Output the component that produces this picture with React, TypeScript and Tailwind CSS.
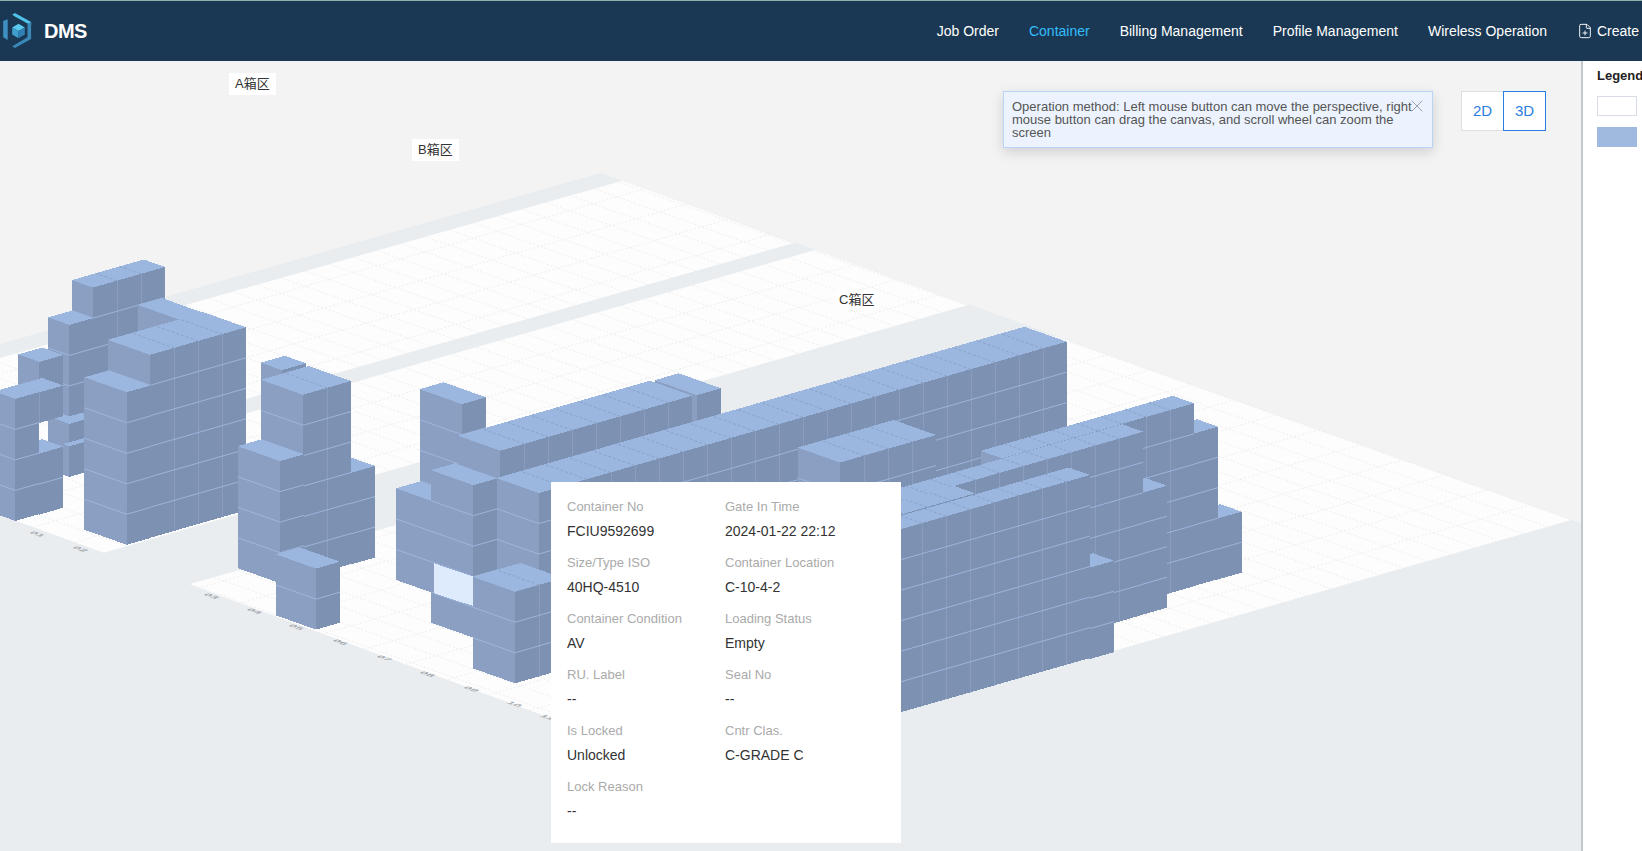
import { FilePlus, X } from 'lucide-react'

type Pt = [number, number]
type Run = { x: number; y: number; n: number; l: number; d?: number }

const UX = 24
const UY = 6.88
const VX = 42.3
const VY = 15
const LEVEL = 30.5

const pts = (list: Pt[]) => list.map(p => `${p[0]},${p[1]}`).join(' ')

// x, y = front right corner of the top face, n = columns going left, l = levels, d = depth (1 = 40ft)
const runs: Run[] = [
  // left cluster
  { x: 165, y: 267, n: 3, l: 6, d: 0.5 },
  { x: 204, y: 313, n: 1, l: 6 },
  { x: 93.3, y: 417, n: 1, l: 1, d: 0.5 },
  { x: 93.3, y: 318, n: 1, l: 3, d: 0.5 },
  { x: 93.3, y: 439.5, n: 1, l: 1, d: 0.15 },
  { x: 63.3, y: 355, n: 1, l: 2, d: 0.5 },
  { x: 63.3, y: 385.5, n: 2, l: 1, d: 0.5 },
  { x: 63.3, y: 446.7, n: 1, l: 2, d: 0.5 },
  { x: 39.3, y: 392, n: 1, l: 4, d: 0.5 },
  { x: 246, y: 327.3, n: 4, l: 6 },
  { x: 150.7, y: 385.4, n: 1, l: 5 },
  // second cluster
  { x: 306, y: 363.3, n: 1, l: 1, d: 0.5 },
  { x: 375, y: 466, n: 1, l: 3 },
  { x: 351, y: 381, n: 2, l: 6 },
  { x: 304, y: 454.3, n: 1, l: 4 },
  { x: 340, y: 561.7, n: 1, l: 2, d: 0.95 },
  // long rows behind the tooltip
  { x: 721, y: 388.3, n: 1, l: 3 },
  { x: 486, y: 397.3, n: 1, l: 4 },
  { x: 692.3, y: 395.7, n: 8, l: 5 },
  { x: 1066.7, y: 341.7, n: 22, l: 6 },
  { x: 936, y: 435, n: 4, l: 5 },
  { x: 458, y: 495, n: 1, l: 3, d: 0.9 },
  { x: 497.3, y: 478.3, n: 1, l: 5 },
  // right cluster
  { x: 1241.7, y: 511.7, n: 1, l: 2, d: 0.5 },
  { x: 1218, y: 426.7, n: 1, l: 5, d: 0.5 },
  { x: 1194, y: 403.3, n: 8, l: 6, d: 0.5 },
  { x: 1167, y: 485.7, n: 1, l: 4, d: 0.5 },
  { x: 1143.3, y: 431.7, n: 12, l: 6, d: 0.5 },
  { x: 1114, y: 560.7, n: 1, l: 3, d: 0.5 },
  { x: 975, y: 493.3, n: 6, l: 6, d: 0.5 },
  { x: 1090, y: 475, n: 10, l: 6, d: 0.5 },
]

const frontRun: Run = { x: 563, y: 578, n: 2, l: 3 }
const zones: Pt[][] = [
  [[622.4, 180.7], [794, 243], [0, 469], [0, 358]],
  [[815, 250], [968, 305], [103.6, 552.7], [0, 515], [0, 484]],
  [[189.3, 584.3], [1055.3, 336], [1571.7, 520], [694, 771]],
]
const groundMarks: Pt[] = [[35, 533], [78, 548], [209, 595], [252, 610], [294, 626], [338, 641], [382, 657], [425, 673], [469, 688], [512, 703], [545, 716]]

function Stack({ run }: { run: Run }) {
  const { x, y, n, l, d = 1 } = run
  const fx = x - UX * n
  const fy = y + UY * n
  const h = l * LEVEL
  const bx = VX * d
  const by = VY * d
  const cols = Array.from({ length: n - 1 }, (_, i) => i + 1)
  const levels = Array.from({ length: l - 1 }, (_, i) => i + 1)
  return (
    <g>
      <g shapeRendering="crispEdges">
        <polygon points={pts([[x, y], [fx, fy], [fx - bx, fy - by], [x - bx, y - by]])} fill="#9bb7df" />
        <polygon points={pts([[fx, fy], [fx - bx, fy - by], [fx - bx, fy - by + h], [fx, fy + h]])} fill="#8a9fc1" />
        <polygon points={pts([[x, y], [fx, fy], [fx, fy + h], [x, y + h]])} fill="#7d91b2" />
      </g>
      {cols.map(i => (
        <line key={`v${i}`} x1={Math.round(x - UX * i) + 0.5} y1={y + UY * i} x2={Math.round(x - UX * i) + 0.5} y2={y + UY * i + h} stroke="#8a9dc0" />
      ))}
      {cols.map(i => (
        <line key={`t${i}`} x1={x - UX * i} y1={y + UY * i} x2={x - UX * i - bx} y2={y + UY * i - by} stroke="#88a0c6" strokeWidth={0.9} strokeDasharray="3 2" />
      ))}
      {levels.map(j => (
        <g key={j}>
          <line x1={x} y1={y + j * LEVEL} x2={fx} y2={fy + j * LEVEL} stroke="#a0b9e1" strokeWidth={0.9} />
          <line x1={fx} y1={fy + j * LEVEL} x2={fx - bx} y2={fy - by + j * LEVEL} stroke="#a0b9e1" strokeWidth={0.9} />
        </g>
      ))}
    </g>
  )
}

function Yard() {
  const gridSteps = Array.from({ length: 121 }, (_, i) => i - 60)
  return (
    <svg viewBox="0 61 1581 790" className="block h-full w-full">
      <defs>
        <clipPath id="zones">
          {zones.map((zone, i) => (
            <polygon key={i} points={pts(zone)} />
          ))}
        </clipPath>
      </defs>
      <polygon points={pts([[0, 344], [600.5, 173], [1581, 523], [1581, 851], [0, 851]])} fill="#e9edf0" />
      {zones.map((zone, i) => (
        <polygon key={i} points={pts(zone)} fill="#fdfdfd" />
      ))}
      <g clipPath="url(#zones)" stroke="#ededed" strokeWidth={0.9} strokeDasharray="2 2">
        {gridSteps.map(k => (
          <line key={`a${k}`} x1={1571.7 + k * UX + 60 * VX} y1={520 - k * UY + 60 * VY} x2={1571.7 + k * UX - 60 * VX} y2={520 - k * UY - 60 * VY} />
        ))}
        {gridSteps.map(k => (
          <line key={`b${k}`} x1={1571.7 + k * VX + 80 * UX} y1={520 + k * VY - 80 * UY} x2={1571.7 + k * VX - 80 * UX} y2={520 + k * VY + 80 * UY} />
        ))}
      </g>
      {groundMarks.map((m, i) => (
        <text key={i} x={0} y={0} fontSize={7} fontWeight={700} fill="#a4a8ac" fontFamily="Liberation Sans, sans-serif" textAnchor="middle" transform={`matrix(1.6 0.55 -1 0.35 ${m[0]} ${m[1] + 2})`}>
          {String(i + 1).padStart(2, '0')}
        </text>
      ))}
      {runs.map((run, i) => (
        <Stack key={i} run={run} />
      ))}
      <polygon points={pts([[434, 563.3], [473.3, 576.7], [473.3, 606], [434, 593.3]])} fill="#deebfd" shapeRendering="crispEdges" />
      <Stack run={frontRun} />
    </svg>
  )
}

function Logo() {
  return (
    <svg viewBox="0 0 36 40" className="h-[36px] w-[33px]">
      <polygon points="14,0 32,10 32,14 14,4 11,2" fill="#4fc3ea" />
      <polygon points="32,10 32,29 14,39 11,37 28,27 28,12" fill="#3a88b8" />
      <polygon points="1,9 6,7 6,30 1,27" fill="#3f90c2" />
      <polygon points="18,12 25,16 18,20 11,16" fill="#5ccaee" />
      <polygon points="11,16 18,20 18,28 11,24" fill="#409fcf" />
      <polygon points="25,16 18,20 18,28 25,24" fill="#2f80b4" />
    </svg>
  )
}

const navItems = ['Job Order', 'Container', 'Billing Management', 'Profile Management', 'Wireless Operation']

const tipRows = [
  ['Container No', 'FCIU9592699'],
  ['Gate In Time', '2024-01-22 22:12'],
  ['Size/Type ISO', '40HQ-4510'],
  ['Container Location', 'C-10-4-2'],
  ['Container Condition', 'AV'],
  ['Loading Status', 'Empty'],
  ['RU. Label', '--'],
  ['Seal No', '--'],
  ['Is Locked', 'Unlocked'],
  ['Cntr Clas.', 'C-GRADE C'],
  ['Lock Reason', '--'],
]

export default function App() {
  return (
    <div className="flex h-screen flex-col overflow-hidden bg-white font-['Liberation_Sans',Arial,sans-serif]">
      {/* Header */}
      <header className="flex h-[61px] shrink-0 items-center border-t border-[#8fb0ae] bg-[#1a3853] pl-[2px]">
        <Logo />
        <span className="ml-[9px] text-[20px] font-bold tracking-[-0.5px] text-white">DMS</span>
        <nav className="ml-auto flex items-center gap-[30px] text-[14px] text-white">
          {navItems.map(item => (
            <span key={item} className={item === 'Container' ? 'text-[#33bdfb]' : ''}>{item}</span>
          ))}
          <span className="flex items-center gap-[4px] pr-[3px]">
            <FilePlus size={16} strokeWidth={1.4} />
            Create
          </span>
        </nav>
      </header>

      <div className="flex min-h-0 flex-1">
        {/* Canvas */}
        <main className="relative w-[1581px] shrink-0 overflow-hidden bg-[#f3f3f3]">
          <Yard />
          <div className="absolute left-[229px] top-[12px] bg-white px-[6px] py-[2px] font-['Liberation_Sans','Noto_Sans_CJK_SC',sans-serif] text-[13px] leading-[18px] text-[#333]">A箱区</div>
          <div className="absolute left-[412px] top-[78px] bg-white px-[6px] py-[2px] font-['Liberation_Sans','Noto_Sans_CJK_SC',sans-serif] text-[13px] leading-[18px] text-[#333]">B箱区</div>
          <div className="absolute left-[833px] top-[229px] bg-[#fdfdfd] px-[6px] py-[1px] font-['Liberation_Sans','Noto_Sans_CJK_SC',sans-serif] text-[13px] leading-[18px] text-[#333]">C箱区</div>

          <div className="absolute left-[1003px] top-[30px] h-[57px] w-[430px] border border-[#b9d4f6] bg-[#ecf3fe] pl-[8px] pr-[10px] pt-[8px] text-[13px] leading-[13px] text-[#555] shadow-[0_4px_12px_rgba(0,0,0,0.15)]">
            <p className="w-[403px]">Operation method: Left mouse button can move the perspective, right mouse button can drag the canvas, and scroll wheel can zoom the screen</p>
            <X size={20} strokeWidth={1} className="absolute right-[5px] top-[4px] text-[#8c929a]" />
          </div>

          <div className="absolute left-[1461px] top-[30px] flex text-[15px] text-[#2a7de1]">
            <button className="h-[40px] w-[42px] border border-r-0 border-[#dcdfe6] bg-white">2D</button>
            <button className="h-[40px] w-[43px] border border-[#2a7de1] bg-white">3D</button>
          </div>

          {/* Container tooltip */}
          <div className="absolute left-[551px] top-[421px] grid h-[361px] w-[350px] grid-cols-[158px_158px] content-start bg-white pl-[16px] pt-[16px]">
            {tipRows.map(([label, value]) => (
              <div key={label} className="h-[56px]">
                <p className="text-[13px] leading-[18px] text-[#aaa]">{label}</p>
                <p className="mt-[5px] text-[14px] leading-[20px] text-[#333]">{value}</p>
              </div>
            ))}
          </div>
        </main>

        {/* Legend */}
        <aside className="min-w-0 flex-1 overflow-hidden border-l-2 border-[#c3c8cd] bg-white pl-[14px] pt-[6px]">
          <p className="whitespace-nowrap text-[13px] font-bold leading-[18px] text-[#222]">Legend</p>
          <div className="mt-[11px] h-[20px] w-[40px] border border-[#d8dce6] bg-white" />
          <div className="mt-[11px] h-[20px] w-[40px] bg-[#a0badf]" />
        </aside>
      </div>
    </div>
  )
}
